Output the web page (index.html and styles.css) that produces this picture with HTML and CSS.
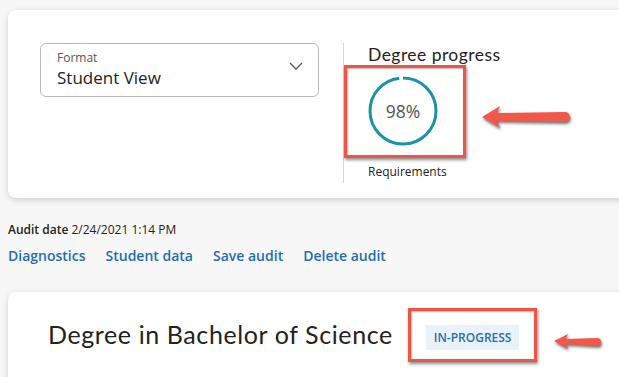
FILE: index.html
```html
<!DOCTYPE html>
<html lang="en">

<head>
    <meta charset="UTF-8">
    <meta name="viewport" content="width=device-width, initial-scale=1.0">
    <title>Degree audit</title>
    <link rel="stylesheet" href="styles.css">
</head>

<body>
    <div class="card summary-card">
        <div class="select-box">
            <div class="select-text">
                <span class="select-label">Format</span>
                <span class="select-value">Student View</span>
            </div>
            <svg class="chevron" width="14" height="8" viewBox="0 0 14 8">
                <path d="M1 1 L7 7 L13 1" fill="none" stroke="#555" stroke-width="1.3" />
            </svg>
        </div>

        <div class="progress-block">
            <h2 class="progress-title">Degree progress</h2>
            <div class="ring">
                <svg width="70" height="70" viewBox="0 0 70 70">
                    <!-- 98% arc, starts at 12 o'clock -->
                    <circle cx="35" cy="35" r="33" fill="none" stroke="#1b93a7" stroke-width="3"
                        stroke-dasharray="203.2 4.1" transform="rotate(-90 35 35)" />
                </svg>
                <span class="ring-value">98%</span>
            </div>
            <div class="progress-caption">Requirements</div>
        </div>

        <!-- annotation -->
        <div class="mark mark-ring"></div>
        <svg class="arrow arrow-ring" width="92" height="26" viewBox="0 0 92 26">
            <path d="M1 13 L19 2 L16 9 L84 8 A5 5 0 0 1 84 18 L16 17 L19 24 Z" />
        </svg>
    </div>

    <div class="audit-info">
        <div class="audit-date"><b>Audit date</b> 2/24/2021 1:14 PM</div>
        <nav class="audit-links">
            <a href="#">Diagnostics</a>
            <a href="#">Student data</a>
            <a href="#">Save audit</a>
            <a href="#">Delete audit</a>
        </nav>
    </div>

    <div class="card degree-card">
        <h1 class="degree-title">Degree in Bachelor of Science</h1>
        <span class="badge">IN-PROGRESS</span>

        <!-- annotation -->
        <div class="mark mark-badge"></div>
        <svg class="arrow arrow-badge" width="50" height="18" viewBox="0 0 50 18">
            <path d="M1 9 L15 2 L13 7 L44 6 A4 4 0 0 1 44 14 L13 12 L15 17 Z" />
        </svg>
    </div>
</body>

</html>
```

FILE: styles.css
```css
:root {
    --page-bg: #f7f7f7;
    --card-bg: #fff;
    --border-color: #b9b9b9;
    --text-color: #222;
    --muted: #555;
    --link-color: #1f6db3;
    --teal: #1b93a7;
    --mark-red: #ee5547;
}

* {
    box-sizing: border-box;
}

body {
    margin: 0;
    padding: 10px 0 0 8px;
    background-color: var(--page-bg);
    font-family: "Open Sans", "Liberation Sans", sans-serif;
    color: var(--text-color);
    overflow: hidden;
}

.card {
    background-color: var(--card-bg);
    border-radius: 8px;
    box-shadow: 0 2px 6px rgba(0, 0, 0, 0.16);
    width: 680px;
    position: relative;
}

.summary-card {
    height: 188px;
    padding: 33px 32px;
    display: flex;
    align-items: flex-start;
}

.select-box {
    width: 279px;
    height: 54px;
    border: 1px solid var(--border-color);
    border-radius: 6px;
    padding: 0 15px 0 16px;
    display: flex;
    align-items: center;
    justify-content: space-between;
}

.select-text {
    display: flex;
    flex-direction: column;
    gap: 2px;
}

.select-label {
    font-size: 12px;
    color: var(--muted);
    line-height: 14px;
}

.select-value {
    font-size: 17px;
    line-height: 22px;
    color: var(--text-color);
}

.chevron {
    margin-top: -8px;
}

.progress-block {
    margin-left: 24px;
    border-left: 1px solid #d6d6d6;
    padding-left: 24px;
    height: 140px;
}

.progress-title {
    margin: 1px 0 0;
    font-family: "Lato", "Open Sans", sans-serif;
    font-weight: 400;
    font-size: 17.5px;
    letter-spacing: 0.45px;
    line-height: 22px;
    color: var(--text-color);
}

.ring {
    position: relative;
    width: 70px;
    height: 70px;
    margin-top: 10px;
    display: flex;
    align-items: center;
    justify-content: center;
}

.ring svg {
    position: absolute;
    top: 0;
    left: 0;
}

.ring-value {
    font-size: 17.5px;
    color: var(--muted);
}

.progress-caption {
    margin-top: 17px;
    font-size: 12px;
    color: var(--text-color);
}

.audit-info {
    padding-top: 24px;
}

.audit-date {
    font-size: 12px;
    line-height: 16px;
}

.audit-date b {
    font-weight: 600;
}

.audit-links {
    margin-top: 8px;
    display: flex;
    gap: 20px;
}

.audit-links a {
    color: var(--link-color);
    font-size: 14px;
    font-weight: 600;
    text-decoration: none;
    line-height: 19px;
}

.degree-card {
    margin-top: 27px;
    height: 110px;
    padding: 26px 40px;
    display: flex;
    align-items: flex-start;
    gap: 33px;
}

.degree-title {
    margin: 0;
    font-family: "Lato", "Open Sans", sans-serif;
    font-weight: 400;
    font-size: 25px;
    letter-spacing: 0.6px;
    line-height: 32px;
    color: var(--text-color);
}

.badge {
    margin-top: 7px;
    background-color: #e8f2fb;
    color: #2a6db0;
    font-size: 12px;
    font-weight: 600;
    padding: 4px 8px;
    line-height: 17px;
}

/* 红框和箭头标注 */
.mark {
    position: absolute;
    border: 3px solid var(--mark-red);
    box-shadow: 1px 2px 3px rgba(0, 0, 0, 0.45), inset 1px 1px 2px rgba(0, 0, 0, 0.3);
}

.mark-ring {
    left: 336px;
    top: 55px;
    width: 122px;
    height: 93px;
}

.mark-badge {
    left: 400px;
    top: 16px;
    width: 129px;
    height: 54px;
}

.arrow {
    position: absolute;
    fill: #f2584a;
    filter: drop-shadow(1px 2px 1.5px rgba(0, 0, 0, 0.55));
}

.arrow-ring {
    left: 473px;
    top: 94px;
}

.arrow-badge {
    left: 545px;
    top: 40px;
}
```
